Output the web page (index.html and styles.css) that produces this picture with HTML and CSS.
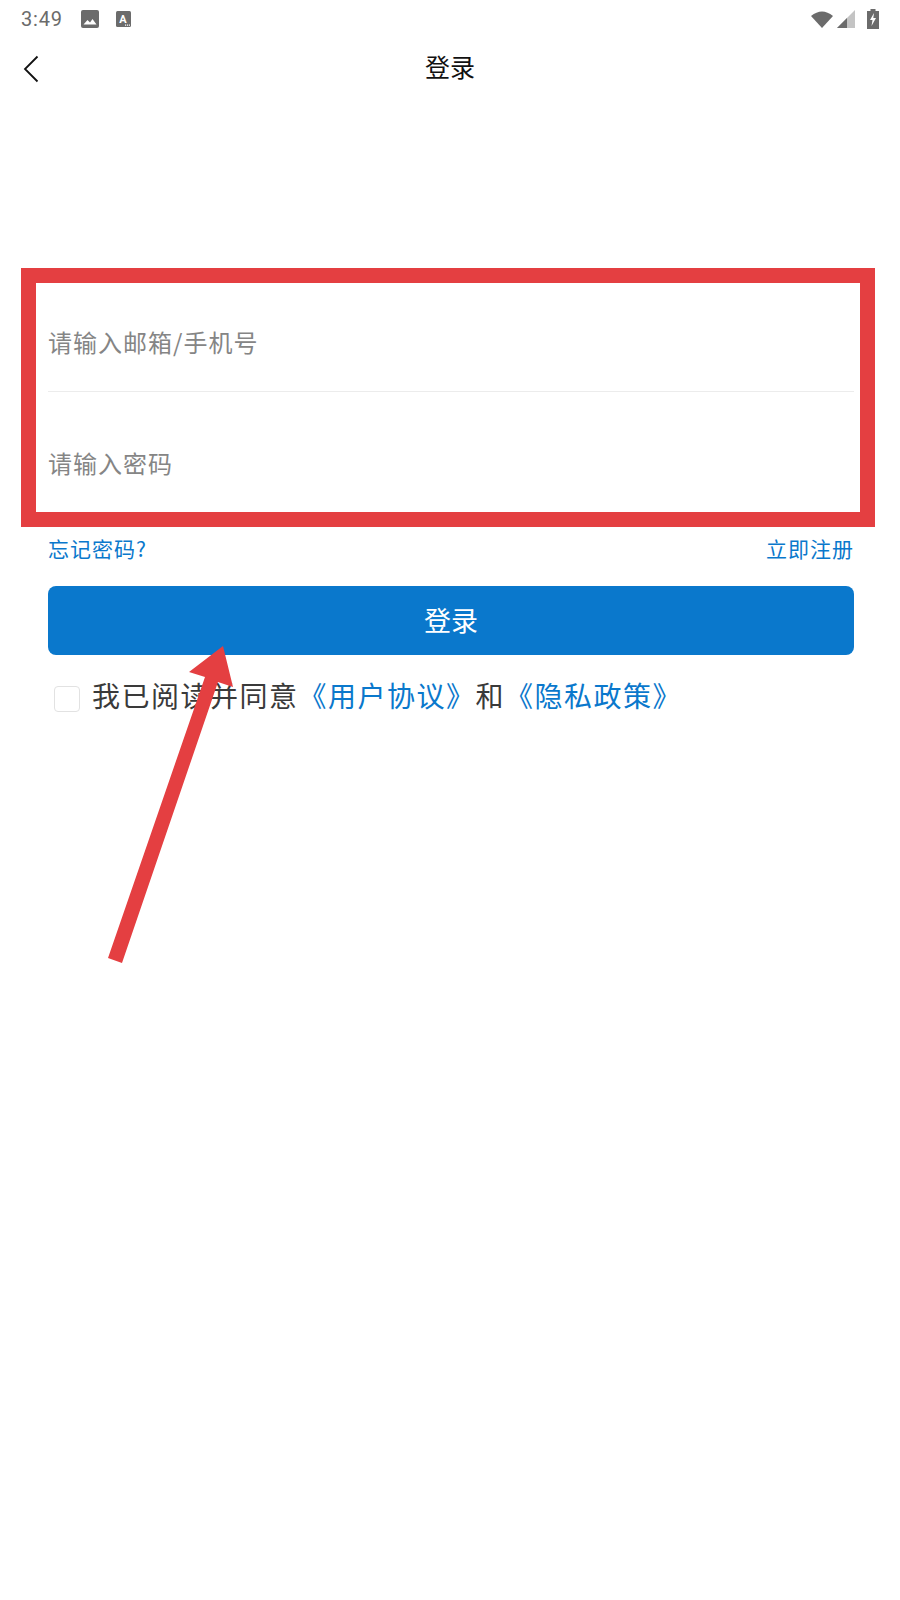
FILE: index.html
```html
<!DOCTYPE html>
<html lang="zh-CN">

<head>
    <meta charset="UTF-8">
    <meta name="viewport" content="width=device-width, initial-scale=1.0">
    <title>登录</title>
    <link rel="stylesheet" href="styles.css">
</head>

<body>
    <div class="page">
        <!-- 状态栏 -->
        <div class="status">
            <span class="time">3:49</span>
            <svg class="ic-photo" width="18" height="18" viewBox="0 0 18 18">
                <rect width="18" height="18" rx="2" fill="#6b6b6b" />
                <path d="M2.5 14.5 L6.5 10 L9 12.5 L11.5 9 L15.5 14.5 Z" fill="#fff" />
            </svg>
            <svg class="ic-a" width="15" height="16" viewBox="0 0 15 16">
                <rect width="15" height="16" rx="1.5" fill="#6b6b6b" />
                <text x="7" y="11.5" class="ic-a-text">A</text>
                <path d="M9 13.5h1.2v1.2H9zM11 13.5h1.2v1.2H11zM13 13.5h1v1.2h-1z" fill="#fff" />
            </svg>
            <div class="status-right">
                <svg class="ic-wifi" width="22" height="17" viewBox="0 0 22 17">
                    <path d="M0 5 Q11 -4 22 5 L11 17 Z" fill="#6b6b6b" />
                </svg>
                <svg class="ic-signal" width="18" height="18" viewBox="0 0 18 18">
                    <path d="M18 0 V18 H0 Z" fill="#c4c4c4" />
                    <path d="M10 8 V18 H0 Z" fill="#6b6b6b" />
                </svg>
                <svg class="ic-batt" width="12" height="20" viewBox="0 0 12 20">
                    <path d="M3.5 0h5v2H12v18H0V2h3.5z" fill="#6b6b6b" />
                    <path d="M7 4 L3 11 H5.5 L4.5 17 L9 9 H6.3 Z" fill="#fff" />
                </svg>
            </div>
        </div>
        <!-- 标题栏 -->
        <div class="nav">
            <svg class="back" width="16" height="28" viewBox="0 0 16 28">
                <path d="M14.5 1.5 L2 14 L14.5 26.5" fill="none" stroke="#111" stroke-width="1.8" />
            </svg>
            <span class="nav-title">登录</span>
        </div>
        <!-- 表单 -->
        <form class="login" action="#">
            <div class="field first">请输入邮箱/手机号</div>
            <div class="field second">请输入密码</div>
            <div class="links">
                <a href="#">忘记密码?</a>
                <a href="#">立即注册</a>
            </div>
            <button type="button" class="btn">登录</button>
            <div class="agree">
                <span class="check"></span>
                <span>我已阅读并同意<a href="#">《用户协议》</a>和<a href="#">《隐私政策》</a></span>
            </div>
        </form>
        <!-- 红框和箭头标注 -->
        <div class="mark"></div>
        <svg class="arrow" width="900" height="1600" viewBox="0 0 900 1600">
            <polygon points="108,958 122,963 218,682 233,687 223,646 189,672 205,677" fill="#e43f41" />
        </svg>
    </div>
</body>

</html>
```

FILE: styles.css
```css
* {
    margin: 0;
    padding: 0;
    box-sizing: border-box;
}

html,
body {
    height: 100%;
    width: 100%;
    background: #fff;
}

body {
    font-family: "Noto Sans CJK SC", "Noto Sans", sans-serif;
}

a {
    color: #0a78cc;
    text-decoration: none;
}

.page {
    position: relative;
    width: 900px;
    height: 1600px;
    overflow: hidden;
}

.status {
    display: flex;
    align-items: center;
    height: 38px;
    padding: 0 21px;
}

.time {
    font-family: Roboto, sans-serif;
    font-size: 20px;
    color: #6b6b6b;
    letter-spacing: 0.8px;
}

.ic-photo {
    margin-left: 18px;
}

.ic-a {
    margin-left: 17px;
}

.ic-a-text {
    font-family: Roboto, sans-serif;
    font-size: 11px;
    font-weight: 700;
    fill: #fff;
    text-anchor: middle;
}

.status-right {
    display: flex;
    align-items: center;
    margin-left: auto;
}

.ic-signal {
    margin-left: 4px;
}

.ic-batt {
    margin-left: 12px;
}

.nav {
    position: relative;
    display: flex;
    align-items: center;
    justify-content: center;
    height: 56px;
}

.back {
    position: absolute;
    left: 23px;
    top: 17px;
}

.nav-title {
    font-size: 25px;
    color: #111;
}

.login {
    padding: 0 46px 0 48px;
    margin-top: 188px;
}

.field {
    font-size: 24px;
    line-height: 36px;
    letter-spacing: 1px;
    color: #858585;
}

.first {
    height: 110px;
    padding-top: 42px;
    border-bottom: 1px solid #ececec;
}

.second {
    height: 138px;
    padding-top: 53px;
}

.links {
    display: flex;
    justify-content: space-between;
    margin-top: 3px;
    font-size: 21px;
    line-height: 30px;
    letter-spacing: 1px;
}

.btn {
    display: block;
    width: 100%;
    height: 69px;
    margin-top: 23px;
    padding-bottom: 3px;
    border: none;
    border-radius: 8px;
    background: #0a78cc;
    color: #fff;
    font-family: inherit;
    font-size: 27px;
}

.agree {
    display: flex;
    align-items: center;
    margin-top: 19px;
    padding-left: 6px;
    font-size: 28px;
    line-height: 42px;
    letter-spacing: 1.5px;
    color: #3a3a3a;
}

.check {
    width: 26px;
    height: 26px;
    margin-top: 7px;
    margin-right: 12px;
    border: 1px solid #e2e2e2;
    border-radius: 4px;
    background: #fff;
}

.mark {
    position: absolute;
    left: 21px;
    top: 268px;
    width: 854px;
    height: 259px;
    border: 15px solid #e43f41;
}

.arrow {
    position: absolute;
    left: 0;
    top: 0;
}
```
